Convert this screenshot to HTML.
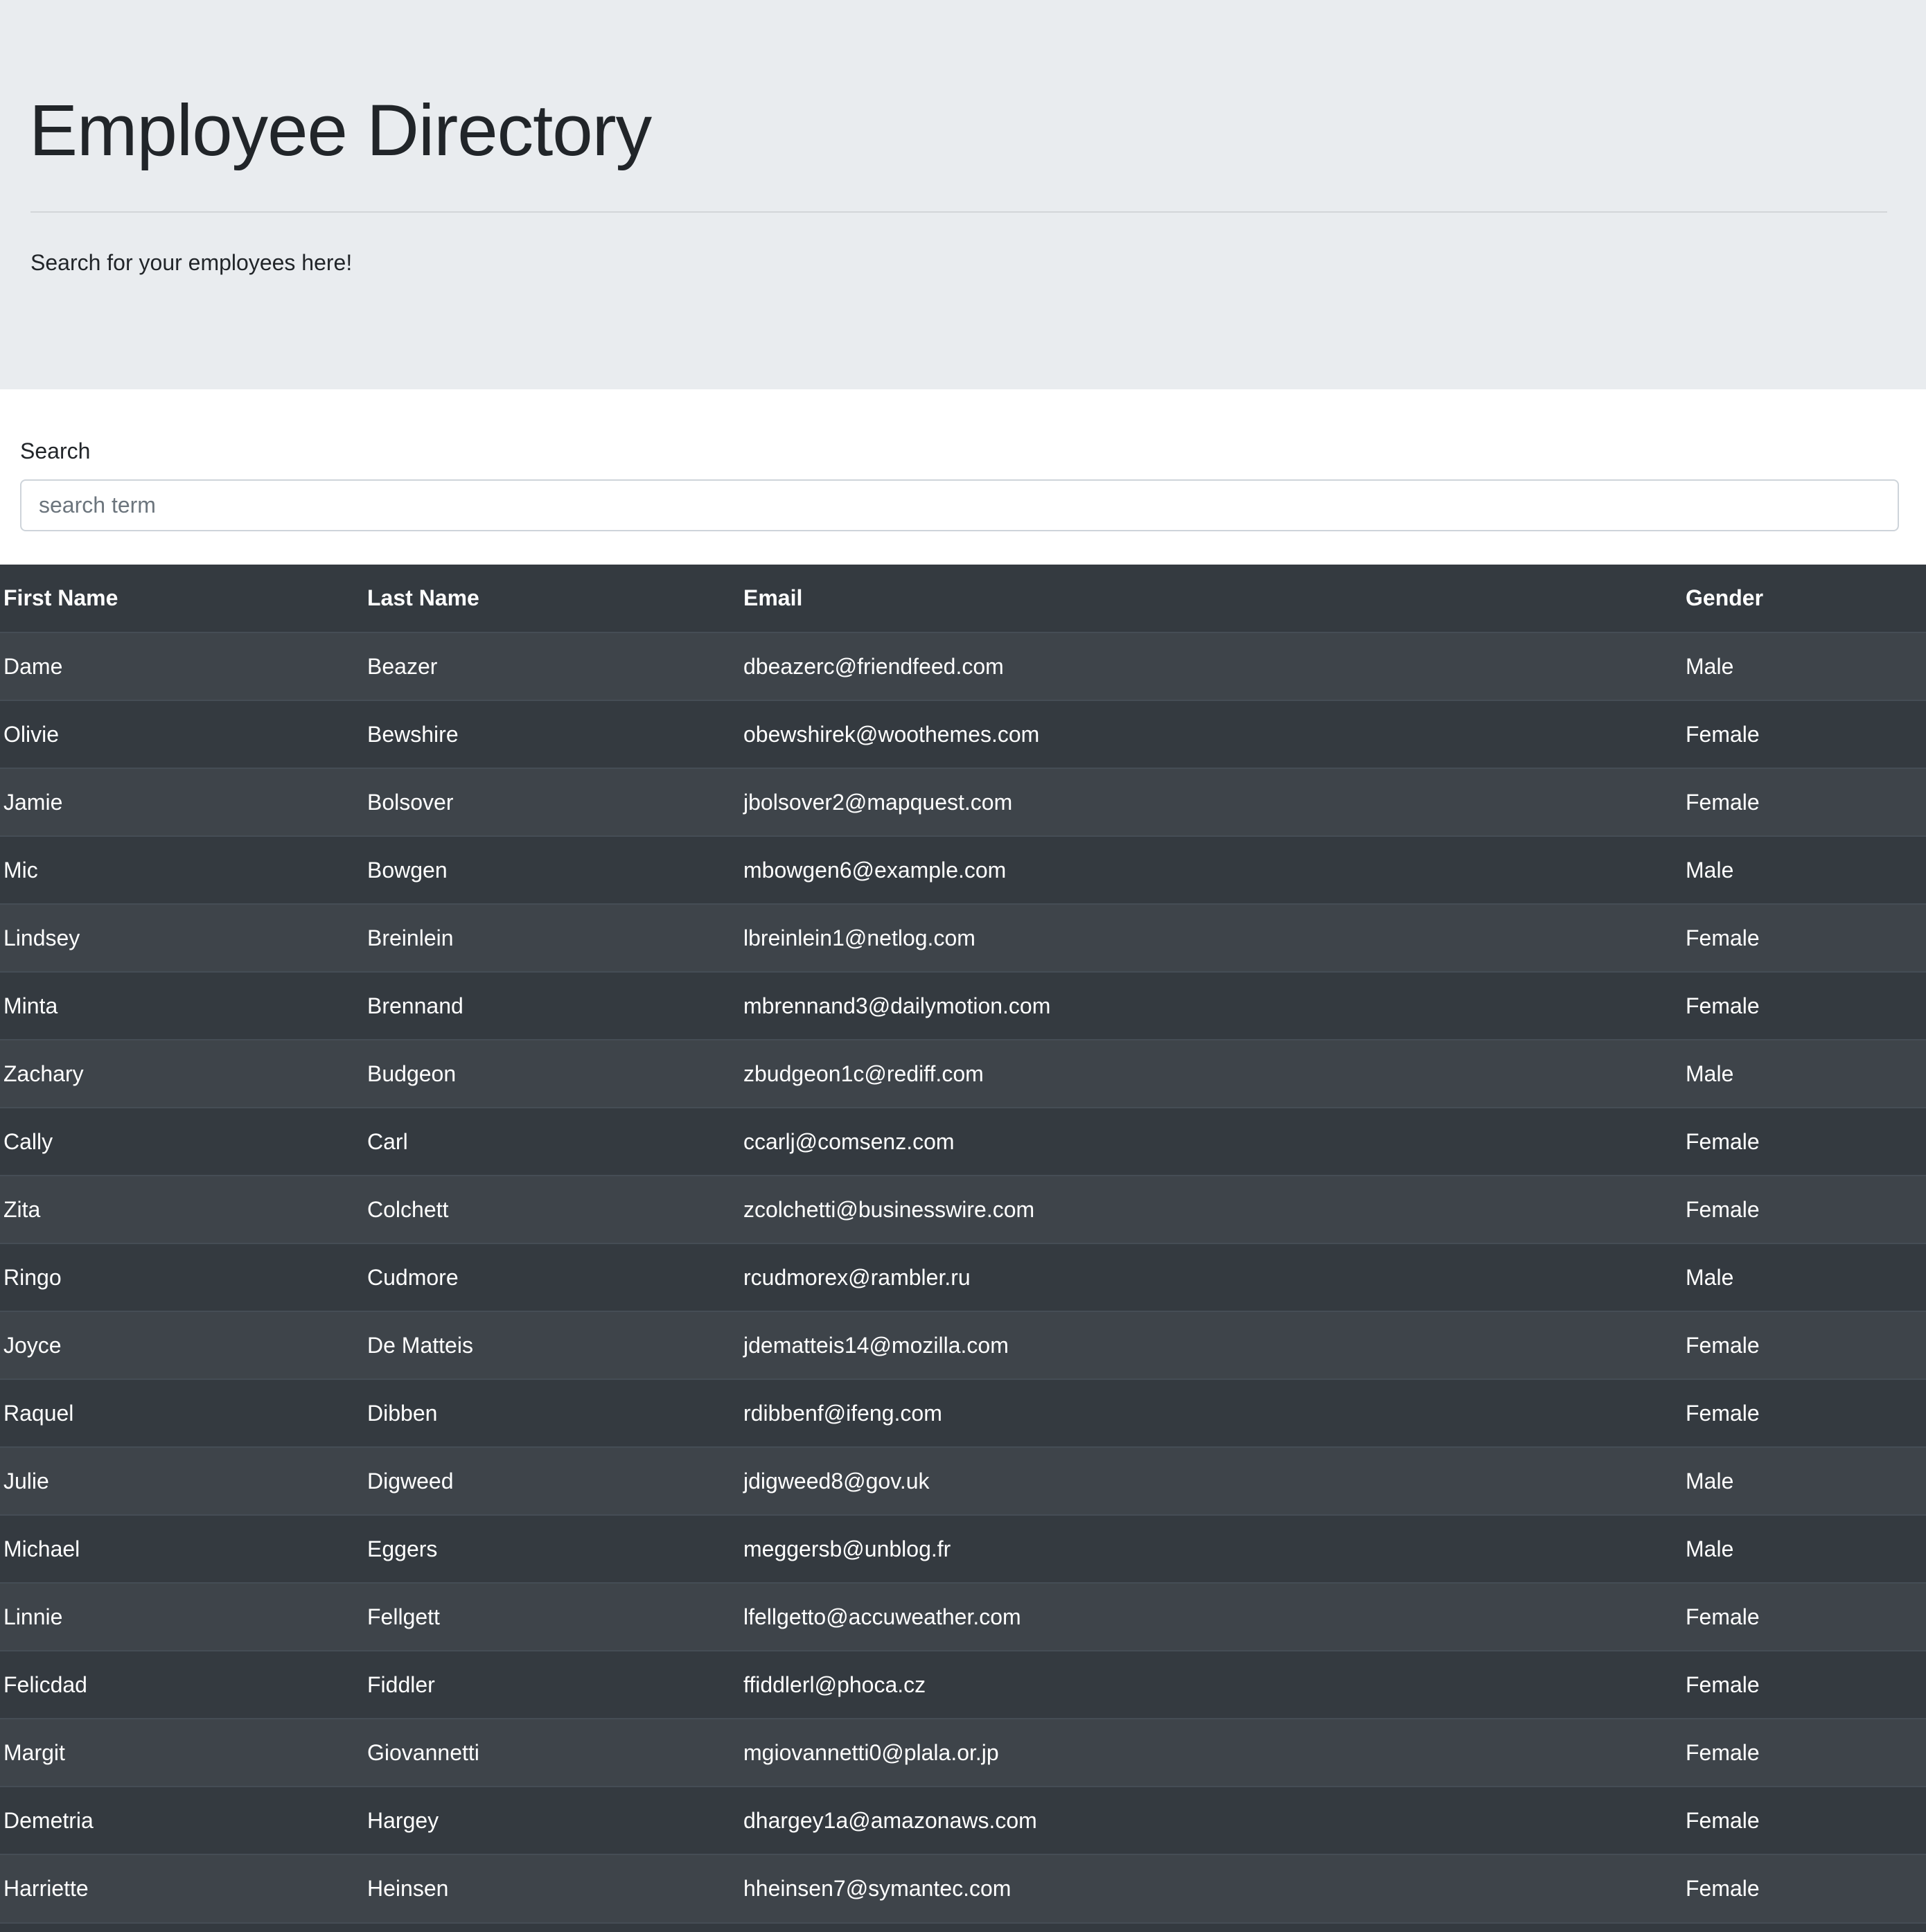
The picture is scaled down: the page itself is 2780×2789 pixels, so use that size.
<!DOCTYPE html>
<html><head><meta charset="utf-8"><style>
*{box-sizing:border-box;margin:0;padding:0}
html{width:2780px;height:2789px;overflow:hidden}
body{width:2780px;height:2789px;overflow:hidden;background:#fff;font-family:"Liberation Sans",sans-serif;color:#212529;position:relative}
.wrap{position:relative;width:2780px;height:2789px;overflow:hidden}
.jumbo{position:absolute;left:0;top:0;width:2780px;height:562px;background:#e9ecef}
h1{position:absolute;left:42px;top:126px;font-size:105px;font-weight:300;line-height:1.2;color:#212529;letter-spacing:-1px}
.hr{position:absolute;left:44px;top:305px;width:2680px;height:2px;background:#d3d6d9}
.lead{position:absolute;left:44px;top:359px;font-size:32px;line-height:40px}
.label{position:absolute;left:29px;top:631px;font-size:32px;line-height:40px}
.input{position:absolute;left:29px;top:692px;width:2712px;height:75px;border:2px solid #ced4da;border-radius:8px;background:#fff;font-size:32px;color:#6c757d;padding-left:25px;line-height:71px}
table{position:absolute;left:0;top:815px;width:2780px;border-collapse:collapse;table-layout:fixed;background:#343a40;color:#fff;font-size:32px}
td,th{height:98px;padding:0 0 0 5px;text-align:left;vertical-align:middle;border-top:2px solid #454d55}
th{font-weight:bold;border-top:none;height:98px}
tr.s td{background:#3e444a}
.tail{position:absolute;left:0;top:2775px;width:2780px;height:14px;background:#343a40;border-top:2px solid #454d55}
</style></head><body><div class="wrap">
<div class="jumbo">
<h1>Employee Directory</h1>
<div class="hr"></div>
<div class="lead">Search for your employees here!</div>
</div>
<div class="label">Search</div>
<div class="input">search term</div>
<table>
<colgroup><col style="width:525px"><col style="width:543px"><col style="width:1360px"><col></colgroup>
<tr><th>First Name</th><th>Last Name</th><th>Email</th><th>Gender</th></tr>
<tr class="s"><td>Dame</td><td>Beazer</td><td>dbeazerc@friendfeed.com</td><td>Male</td></tr>
<tr><td>Olivie</td><td>Bewshire</td><td>obewshirek@woothemes.com</td><td>Female</td></tr>
<tr class="s"><td>Jamie</td><td>Bolsover</td><td>jbolsover2@mapquest.com</td><td>Female</td></tr>
<tr><td>Mic</td><td>Bowgen</td><td>mbowgen6@example.com</td><td>Male</td></tr>
<tr class="s"><td>Lindsey</td><td>Breinlein</td><td>lbreinlein1@netlog.com</td><td>Female</td></tr>
<tr><td>Minta</td><td>Brennand</td><td>mbrennand3@dailymotion.com</td><td>Female</td></tr>
<tr class="s"><td>Zachary</td><td>Budgeon</td><td>zbudgeon1c@rediff.com</td><td>Male</td></tr>
<tr><td>Cally</td><td>Carl</td><td>ccarlj@comsenz.com</td><td>Female</td></tr>
<tr class="s"><td>Zita</td><td>Colchett</td><td>zcolchetti@businesswire.com</td><td>Female</td></tr>
<tr><td>Ringo</td><td>Cudmore</td><td>rcudmorex@rambler.ru</td><td>Male</td></tr>
<tr class="s"><td>Joyce</td><td>De Matteis</td><td>jdematteis14@mozilla.com</td><td>Female</td></tr>
<tr><td>Raquel</td><td>Dibben</td><td>rdibbenf@ifeng.com</td><td>Female</td></tr>
<tr class="s"><td>Julie</td><td>Digweed</td><td>jdigweed8@gov.uk</td><td>Male</td></tr>
<tr><td>Michael</td><td>Eggers</td><td>meggersb@unblog.fr</td><td>Male</td></tr>
<tr class="s"><td>Linnie</td><td>Fellgett</td><td>lfellgetto@accuweather.com</td><td>Female</td></tr>
<tr><td>Felicdad</td><td>Fiddler</td><td>ffiddlerl@phoca.cz</td><td>Female</td></tr>
<tr class="s"><td>Margit</td><td>Giovannetti</td><td>mgiovannetti0@plala.or.jp</td><td>Female</td></tr>
<tr><td>Demetria</td><td>Hargey</td><td>dhargey1a@amazonaws.com</td><td>Female</td></tr>
<tr class="s"><td>Harriette</td><td>Heinsen</td><td>hheinsen7@symantec.com</td><td>Female</td></tr>
</table>
<div class="tail"></div>
</div></body></html>
